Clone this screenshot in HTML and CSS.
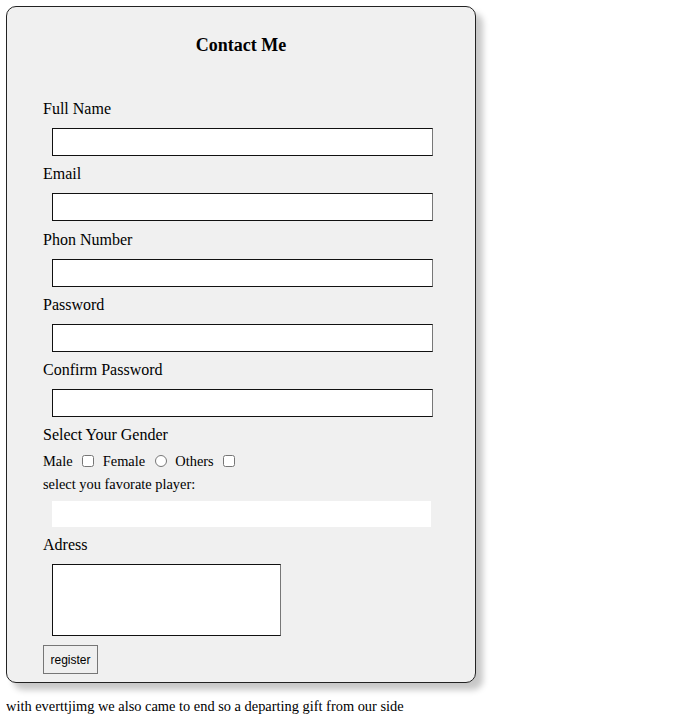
FILE: index.html
```html
<!DOCTYPE html>
<html>
<head>
<meta charset="utf-8">
<title>Contact Me</title>
<link rel="stylesheet" href="styles.css">
</head>
<body>
<form class="card">
  <h2 class="title">Contact Me</h2>
  <label class="lbl">Full Name</label>
  <input class="field" type="text">
  <label class="lbl">Email</label>
  <input class="field" type="email">
  <label class="lbl">Phon Number</label>
  <input class="field" type="tel">
  <label class="lbl">Password</label>
  <input class="field" type="password">
  <label class="lbl">Confirm Password</label>
  <input class="field" type="password">
  <label class="lbl lbl-gender">Select Your Gender</label>
  <div class="gender">Male <input type="checkbox"> Female <input type="radio"> Others <input type="checkbox"></div>
  <label class="small">select you favorate player:</label>
  <input class="player" type="text" list="players">
  <label class="lbl">Adress</label>
  <textarea class="addr"></textarea>
  <button class="btn" type="button">register</button>
</form>
<p class="foot">with everttjimg we also came to end so a departing gift from our side</p>
</body>
</html>
```

FILE: styles.css
```css
body {
  margin: 6px;
  font-family: "Liberation Serif", "Times New Roman", serif;
  color: #000;
  background: #fff;
}
.card {
  box-sizing: border-box;
  width: 470px;
  background: #f0f0f0;
  border: 1px solid #222;
  border-radius: 10px;
  box-shadow: 7px 7px 6px rgba(0, 0, 0, 0.22);
  padding: 28px 0 8px 36px;
  display: flex;
  flex-direction: column;
  align-items: flex-start;
}
.title {
  margin: 0 0 44px 0;
  font-size: 18px;
  line-height: 21px;
  font-weight: bold;
  align-self: stretch;
  text-align: center;
  padding-right: 36px;
}
.lbl {
  font-size: 16px;
  line-height: 18px;
  margin-bottom: 10px;
}
.field {
  margin: 0 0 9.3px 9px;
  width: 381px;
  height: 28px;
  box-sizing: border-box;
  border: 1px solid #111;
  border-right-color: #777;
  background: #fff;
  padding: 0 4px;
  font-family: inherit;
}
.lbl-gender {
  margin-bottom: 8px;
}
.gender {
  font-size: 14.4px;
  line-height: 19px;
  height: 19px;
  margin-bottom: 5px;
}
.gender input {
  width: 12px;
  height: 12px;
  margin: 3px 5px 3px 6px;
  vertical-align: -1px;
}
.small {
  font-size: 14.4px;
  line-height: 16px;
  margin-bottom: 9px;
}
.player {
  margin: 0 0 9px 9px;
  width: 379px;
  height: 26px;
  box-sizing: border-box;
  border: none;
  background: #fff;
}
.addr {
  margin: 0 0 9px 9px;
  width: 229px;
  height: 72px;
  box-sizing: border-box;
  border: 1px solid #111;
  border-right-color: #777;
  background: #fff;
  resize: none;
  padding: 2px;
}
.btn {
  width: 55px;
  height: 29px;
  box-sizing: border-box;
  font-family: "Liberation Sans", Arial, sans-serif;
  font-size: 12px;
  padding: 0;
  background: #efefef;
  border: 1px solid #767676;
  border-radius: 0;
  color: #000;
}
.foot {
  font-size: 14.4px;
  line-height: 16px;
  margin: 15px 0 0 0;
}
```
